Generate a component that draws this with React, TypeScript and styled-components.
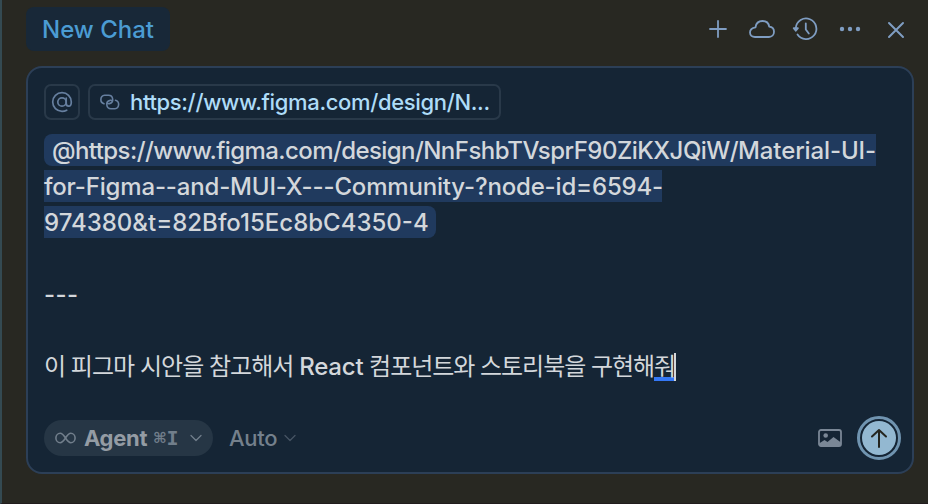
import React from "react";
import styled, { createGlobalStyle } from "styled-components";

const GlobalStyle = createGlobalStyle`
  * { box-sizing: border-box; }
  body {
    margin: 0;
    background: #282822;
    font-family: Inter, "Noto Sans CJK KR", sans-serif;
    -webkit-font-smoothing: antialiased;
  }
`;

const Sidebar = styled.div`
  width: 928px;
  height: 504px;
  overflow: hidden;
  display: flex;
  flex-direction: column;
  padding: 7px 14px 0 24px;
  border-left: 2px solid #344a52;
  border-bottom: 1px solid #211c1d;
  background: #282822;
`;

const Header = styled.header`
  display: flex;
  align-items: center;
  justify-content: space-between;
  height: 44px;
  margin-bottom: 15px;
`;

const Tab = styled.div`
  width: 144px;
  height: 44px;
  padding-left: 16px;
  border-radius: 8px;
  background: #182838;
  color: #4b9cd3;
  font-size: 24px;
  font-weight: 500;
  line-height: 46px;
  white-space: nowrap;
`;

const Actions = styled.div`
  display: flex;
  align-items: center;
  gap: 16px;
  padding-right: 4px;
  color: #7f9dc2;
`;

const Icon = styled.svg`
  display: block;
  flex: none;
  fill: none;
  stroke: currentColor;
  stroke-linecap: round;
  stroke-linejoin: round;
`;

const CloseIcon = styled(Icon)`
  margin: 2px 0 0 2px;
`;

const Composer = styled.section`
  display: flex;
  flex-direction: column;
  height: 408px;
  padding: 16px 11px 12px 16px;
  border: 2px solid #2c3f57;
  border-radius: 16px;
  background: #152535;
`;

const ContextRow = styled.div`
  display: flex;
  gap: 8px;
  height: 36px;
  margin-bottom: 12px;
`;

const Chip = styled.div<{ $width: number }>`
  display: flex;
  align-items: center;
  justify-content: ${(p) => (p.$width < 40 ? "center" : "flex-start")};
  gap: 10px;
  width: ${(p) => p.$width}px;
  height: 36px;
  padding-left: ${(p) => (p.$width < 40 ? 0 : 9)}px;
  border: 2px solid #293949;
  border-radius: 7px;
  color: #667f9f;
`;

const ChipText = styled.span`
  color: #aedcf8;
  font-size: 22px;
  font-weight: 500;
  letter-spacing: -0.35px;
  white-space: nowrap;
`;

const Editor = styled.div`
  flex: 1;
  color: #d3d7db;
  font-size: 24px;
  line-height: 36px;
`;

const Line = styled.div`
  display: flex;
  align-items: center;
  height: 36px;
  padding-top: 1px;
  white-space: pre;
`;

const Run = styled.span<{ $spacing: number }>`
  font-weight: 500;
  letter-spacing: ${(p) => p.$spacing}px;
`;

const KoreanRun = styled(Run)`
  font-weight: 400;
`;

const MentionLine = styled(Line)`
  padding-top: 0;
`;

const Mention = styled.span<{ $start?: boolean; $end?: boolean; $width: number }>`
  width: ${(p) => p.$width}px;
  height: 32px;
  padding-left: ${(p) => (p.$start ? 8 : 0)}px;
  border-radius: ${(p) => (p.$start ? "8px 0 0 8px" : p.$end ? "0 8px 8px 0" : "0")};
  background: #203a5e;
  line-height: 33px;
`;

const Composing = styled.span`
  width: 20px;
  height: 28px;
  line-height: 28px;
  letter-spacing: -1px;
  border-bottom: 4px solid #3478f6;
`;

const Caret = styled.span`
  width: 2px;
  height: 28px;
  background: #d3d7db;
`;

const Footer = styled.footer`
  display: flex;
  align-items: center;
  justify-content: space-between;
  height: 44px;
`;

const Group = styled.div<{ $gap: number }>`
  display: flex;
  align-items: center;
  gap: ${(p) => p.$gap}px;
  color: #7a8796;
`;

const ModePill = styled.div`
  display: flex;
  align-items: center;
  width: 169px;
  height: 36px;
  padding-left: 11px;
  border-radius: 18px;
  background: #263645;
  color: #717e8b;
`;

const ModeName = styled.span`
  width: 63px;
  margin: 0 7px 0 8px;
  color: #949ca4;
  font-size: 22px;
  font-weight: 700;
  letter-spacing: -0.3px;
  white-space: nowrap;
`;

const Shortcut = styled.span`
  width: 26px;
  margin-right: 10px;
  font-family: "DejaVu Sans Mono", monospace;
  font-size: 20px;
  font-weight: 700;
  letter-spacing: 0.4px;
  white-space: nowrap;
`;

const Model = styled.div`
  display: flex;
  align-items: center;
  gap: 7px;
  color: #465463;
`;

const ModelName = styled.span`
  color: #74808c;
  font-size: 22px;
  font-weight: 500;
  letter-spacing: -0.3px;
`;

const SendRing = styled.button`
  display: flex;
  align-items: center;
  justify-content: center;
  width: 44px;
  height: 44px;
  padding: 0;
  border: 3px solid #7094b0;
  border-radius: 50%;
  background: #152535;
`;

const SendDisc = styled.span`
  display: flex;
  align-items: center;
  justify-content: center;
  width: 34px;
  height: 34px;
  border-radius: 50%;
  background: #93b8d1;
  color: #24251f;
`;

const Chevron = () => (
  <Icon width="12" height="8" viewBox="0 0 12 8" strokeWidth="1.3">
    <path d="M1 1.5 6 6.5 11 1.5" />
  </Icon>
);

export default function App() {
  return (
    <>
      <GlobalStyle />
      <Sidebar>
        <Header>
          <Tab>New Chat</Tab>
          <Actions>
            <Icon width="28" height="28" viewBox="0 0 28 28" strokeWidth="1.8">
              <path d="M14 6v16M6 14h16" />
            </Icon>
            <Icon width="28" height="28" viewBox="0 0 28 28" strokeWidth="1.8">
              <path d="M7 22h14c3 0 5-2.300 5-5.200S24 12 21.200 11.700C20.700 8.300 18 6 14.500 6 10.800 6 8 8.500 7.500 12.300 4.300 12.800 2 14.500 2 17.500 2 20.200 4.200 22 7 22Z" />
            </Icon>
            <Icon width="28" height="28" viewBox="0 0 28 28" strokeWidth="1.8">
              <path d="M3.800 13A10.300 10.300 0 1 1 5.500 19.500" />
              <path d="M1.700 13.200h4.200l-2.100 2.600Z" fill="currentColor" />
              <path d="M13.800 8.300v6.200l3 4" />
            </Icon>
            <Icon width="28" height="28" viewBox="0 0 28 28">
              <g fill="currentColor" stroke="none">
                <circle cx="6" cy="14" r="2.200" />
                <circle cx="14" cy="14" r="2.200" />
                <circle cx="22" cy="14" r="2.200" />
              </g>
            </Icon>
            <CloseIcon width="28" height="28" viewBox="0 0 28 28" strokeWidth="2">
              <path d="m7 7 14 14M21 7l-14 14" />
            </CloseIcon>
          </Actions>
        </Header>
        <Composer>
          <ContextRow>
            <Chip $width={36}>
              <Icon width="24" height="24" viewBox="0 0 24 24" strokeWidth="1.700">
                <circle cx="12" cy="12" r="4.200" />
                <path d="M16.200 8v5.200c0 1.900 1 3 2.500 3 1.700 0 2.600-1.600 2.600-4.200A9.300 9.300 0 1 0 12 21.300c2 0 3.400-.4 4.700-1.100" />
              </Icon>
            </Chip>
            <Chip $width={413}>
              <Icon width="21" height="18" viewBox="0 0 21 18" strokeWidth="1.600">
                <path d="M5 10.700A4.300 4.300 0 0 1 5.600 2.300h3.800a4.200 4.200 0 0 1 1 8.300q-1.200.3-2.200-.4" />
                <path d="M16.500 7.300a4.300 4.300 0 0 1-.6 8.400h-3.800a4.200 4.200 0 0 1-1-8.300q1.200-.3 2.200.4" />
              </Icon>
              <ChipText>https://www.figma.com/design/N...</ChipText>
            </Chip>
          </ContextRow>
          <Editor>
            <MentionLine>
              <Mention $start $width={832}>
                <Run $spacing={-0.58}>@https://www.figma.com/design/</Run>
                <Run $spacing={-0.51}>NnFshbTVsprF90ZiKXJQiW/</Run>
                <Run $spacing={-0.12}>Material-UI-</Run>
              </Mention>
            </MentionLine>
            <MentionLine>
              <Mention $width={618}><Run $spacing={-0.17}>for-Figma--and-MUI-X---Community-?node-id=6594-</Run></Mention>
            </MentionLine>
            <MentionLine>
              <Mention $end $width={392}><Run $spacing={0}>974380&amp;t=82Bfo15Ec8bC4350-4</Run></Mention>
            </MentionLine>
            <Line />
            <Line><Run $spacing={0.4}>---</Run></Line>
            <Line />
            <Line>
              <KoreanRun $spacing={-0.98}>이 피그마 시안을 참고해서 </KoreanRun>
              <Run $spacing={-0.2}>React</Run>
              <KoreanRun $spacing={-1.04}> 컴포넌트와 스토리북을 구현해</KoreanRun>
              <Composing>줘</Composing>
              <Caret />
            </Line>
          </Editor>
          <Footer>
            <Group $gap={16}>
              <ModePill>
                <Icon width="21" height="12" viewBox="0 0 21 12" strokeWidth="1.600">
                  <path d="M10.500 6C8.500 3 7.300 1.300 5.200 1.300a4.300 4.700 0 0 0 0 9.400c2.100 0 3.300-1.700 5.300-4.700s3.200-4.700 5.300-4.700a4.300 4.700 0 0 1 0 9.400c-2.100 0-3.300-1.700-5.300-4.700Z" />
                </Icon>
                <ModeName>Agent</ModeName>
                <Shortcut>⌘I</Shortcut>
                <Chevron />
              </ModePill>
              <Model><ModelName>Auto</ModelName><Chevron /></Model>
            </Group>
            <Group $gap={15}>
              <Icon width="24" height="18" viewBox="0 0 24 18" strokeWidth="1.800">
                <rect x="1" y="1" width="22" height="16" rx="2" />
                <circle cx="7.700" cy="6.500" r="2.300" fill="currentColor" stroke="none" />
                <path d="M1 14.500 6.500 11l3 2L15.500 8 23 13.500V17H1Z" fill="currentColor" stroke="none" />
              </Icon>
              <SendRing>
                <SendDisc>
                  <Icon width="18" height="20" viewBox="0 0 18 20" strokeWidth="2">
                    <path d="M9 19V2M2 8.500 9 2l7 6.500" />
                  </Icon>
                </SendDisc>
              </SendRing>
            </Group>
          </Footer>
        </Composer>
      </Sidebar>
    </>
  );
}
